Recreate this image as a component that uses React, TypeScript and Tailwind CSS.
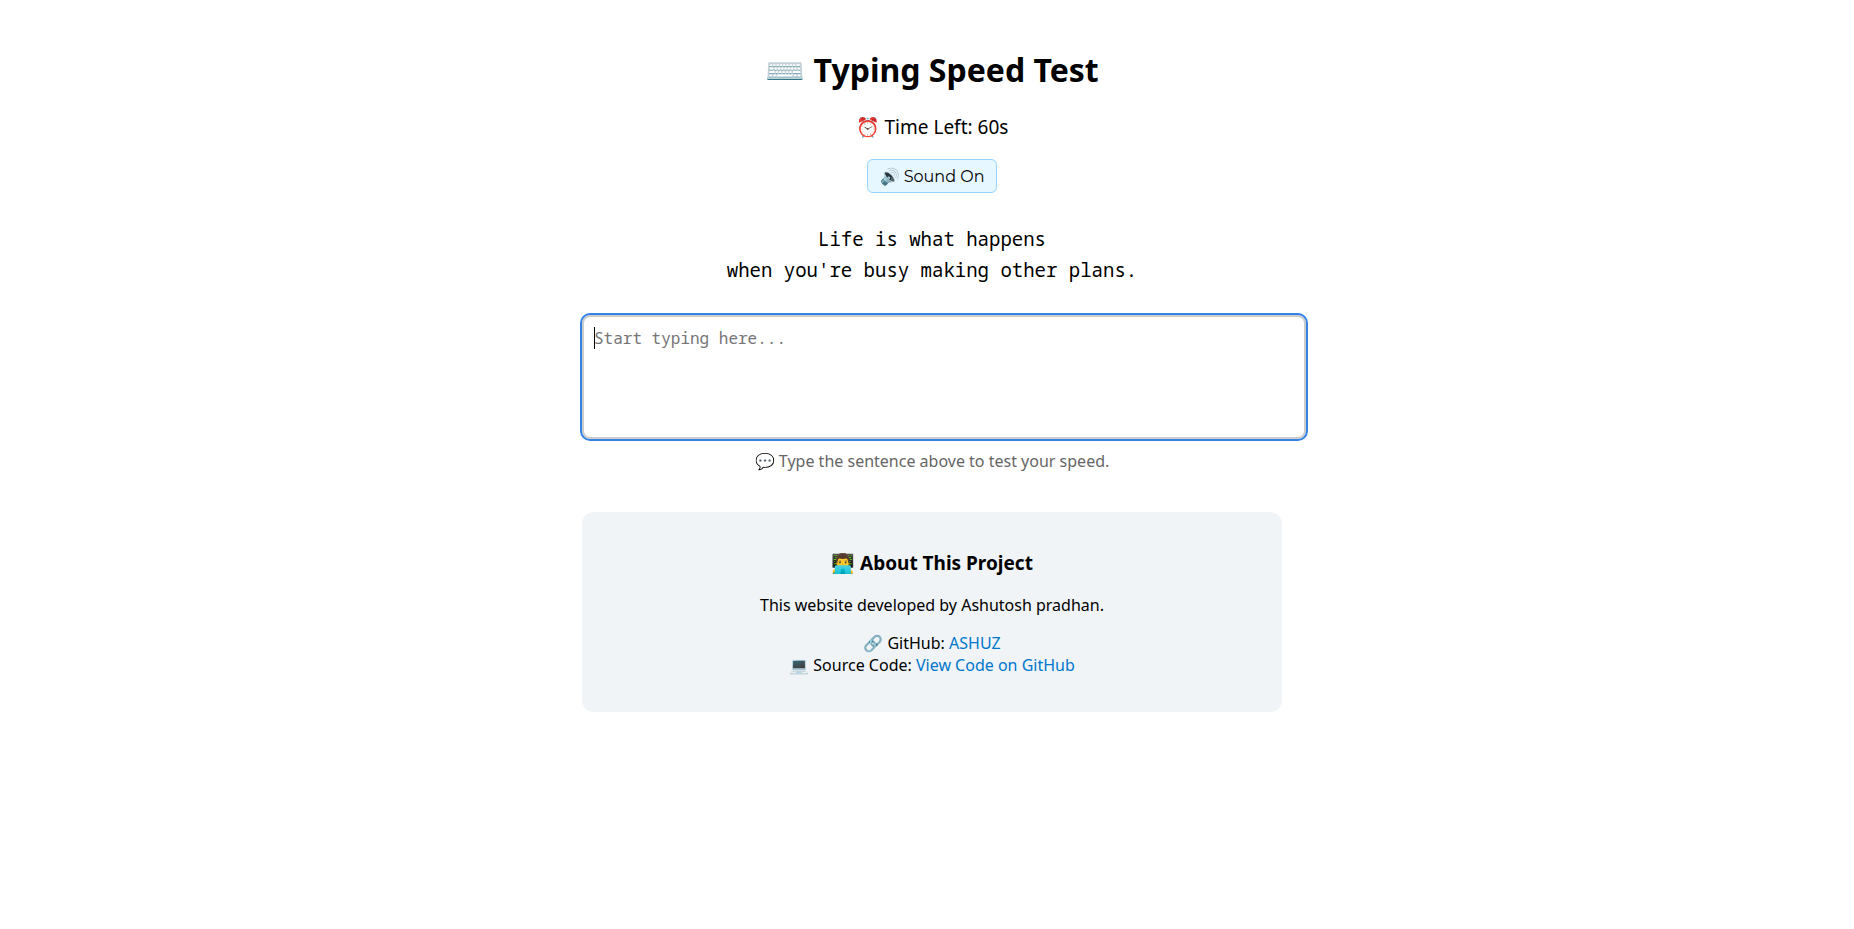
import { useState } from "react";

export default function App() {
  const [text, setText] = useState("");
  const [sound, setSound] = useState(true);

  return (
    <div className="pl-2.5 font-['Noto_Sans',sans-serif] text-base leading-[22px] text-black">
      <main className="mx-auto max-w-[700px] pt-12 text-center">
        <h1 className="text-[32px] leading-[44px] font-bold">⌨️ Typing Speed Test</h1>
        <p className="mt-[22px] text-[19px] leading-[26px]">⏰ Time Left: 60s</p>
        <button
          type="button"
          onClick={() => setSound(!sound)}
          className="mt-[19px] h-[34px] rounded-md border border-[#91d5ff] bg-[#e6f7ff] px-3 pt-0.5 font-['Montserrat',sans-serif] text-base"
        >
          {sound ? "🔊 Sound On" : "🔇 Sound Off"}
        </button>
        <p className="mt-[31px] font-['Noto_Sans_Mono','Liberation_Mono',monospace] text-[19px] leading-[31px]">
          Life is what happens
          <br />
          when you're busy making other plans.
        </p>
        <div className="relative mt-[29px]">
          <textarea
            autoFocus
            aria-label="Typing area"
            placeholder="Start typing here..."
            value={text}
            onChange={(e) => setText(e.target.value)}
            className="box-content block h-[100px] w-full resize-none rounded-lg border-2 border-[#ccc] p-2.5 font-['Noto_Sans_Mono','Liberation_Mono',monospace] text-base leading-[22px] caret-transparent outline-2 outline-[#3584e4] placeholder:text-[#757575]"
          />
          {text === "" && <span className="absolute top-3 left-3 h-[22px] w-px bg-black" />}
        </div>
        <p className="mt-[11px] text-[#666]">💬 Type the sentence above to test your speed.</p>
        <section className="mt-10 rounded-xl bg-[#f0f4f7] px-5 pt-[38px] pb-9">
          <h2 className="text-[19px] leading-[26px] font-bold">👨‍💻 About This Project</h2>
          <p className="mt-[18px]">This website developed by Ashutosh pradhan.</p>
          <p className="mt-4">
            🔗 GitHub: <a href="#github" className="text-[#0077cc]">ASHUZ</a>
            <br />
            💻 Source Code: <a href="#source" className="text-[#0077cc]">View Code on GitHub</a>
          </p>
        </section>
      </main>
    </div>
  );
}
